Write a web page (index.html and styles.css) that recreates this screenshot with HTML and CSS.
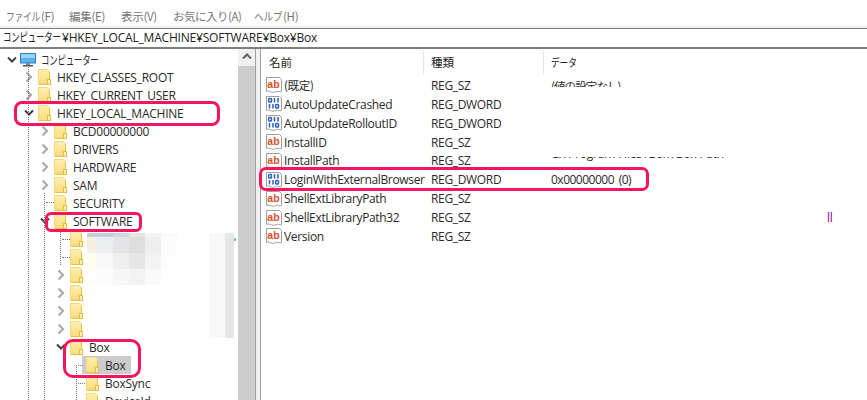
FILE: index.html
```html
<!DOCTYPE html>
<html lang="ja">
<head>
<meta charset="utf-8">
<title>レジストリ エディター</title>
<link rel="stylesheet" href="styles.css">
</head>
<body>
<svg class="defs" width="0" height="0" aria-hidden="true">
  <defs>
    <linearGradient id="fg" x1="0" y1="0" x2="0" y2="1"><stop offset="0" stop-color="#feeeb0"/><stop offset="1" stop-color="#fbdc7c"/></linearGradient>
    <symbol id="folder" viewBox="0 0 13 16">
      <path d="M.5 .5H9.5L11.5 2.5V15.5H.5Z" fill="url(#fg)" stroke="#f3d979"/>
      <path d="M11.5 3V15.5H1" fill="none" stroke="#eac23f"/>
      <rect x="9.5" y="10.5" width="3" height="5" fill="#fdf0bb" stroke="#e9bd33"/>
    </symbol>
    <symbol id="chev-r" viewBox="0 0 8 12"><path d="M1.5 1.5L6 6L1.5 10.500" fill="none" stroke="#a6a6a6" stroke-width="2"/></symbol>
    <symbol id="chev-d" viewBox="0 0 10 8"><path d="M1 1.500L5 5.500L9 1.500" fill="none" stroke="#404040" stroke-width="2"/></symbol>
    <symbol id="ab" viewBox="0 0 16 16">
      <path d="M.5 .5H13.500L15.500 2.500V14.500C13.500 15.500 12 13.500 10 14.500S6 15.500 4 14.500S1.500 14 .5 14.500Z" fill="#fff" stroke="#a0a0a0"/>
      <text x="1.300" y="11" class="ab-text">ab</text>
    </symbol>
    <symbol id="bin" viewBox="0 0 16 16">
      <path d="M.5 .5H13.500L15.500 2.500V14.500C13.500 15.500 12 13.500 10 14.500S6 15.500 4 14.500S1.500 14 .5 14.500Z" fill="#fff" stroke="#a0a0a0"/>
      <g fill="none" stroke="#2a5fc4" stroke-width="1.500">
        <rect x="2.700" y="2.500" width="2.800" height="3.500" rx=".8"/><path d="M8.500 2V6.500M12 2V6.500"/>
        <path d="M3.500 8V12.500M7 8V12.500"/><rect x="9.700" y="8.500" width="2.800" height="3.500" rx=".8"/>
      </g>
    </symbol>
  </defs>
</svg>

<div class="window">
  <nav class="menu">
    <span class="m1"><span class="kana k-file">ファイル</span>(F)</span><span class="m2">編集(E)</span><span class="m3">表示(V)</span><span class="m4">お気に入り(A)</span><span class="m5"><span class="kana k-help">ヘルプ</span>(H)</span>
  </nav>
  <div class="address"><span class="kana k-pc">コンピューター</span>¥HKEY_LOCAL_MACHINE¥SOFTWARE¥Box¥Box</div>

  <main class="panes">
    <section class="tree-pane">
      <div class="tree">
        <div class="row l0"><svg class="slot-icon"><use href="#chev-d"/></svg><svg class="pc" viewBox="0 0 16 14"><rect x=".5" y=".5" width="15" height="9.500" fill="#55b4ee" stroke="#2f7fc0"/><rect x="1" y="1" width="14" height="4" fill="#9ad6f7"/><rect x="6" y="10" width="4" height="2" fill="#7a8a99"/><rect x="3" y="12" width="10" height="1.500" fill="#46525e"/></svg><span class="label pc-label"><span class="kana k-pc">コンピューター</span></span></div>
        <div class="row l1"><svg class="slot-icon"><use href="#chev-r"/></svg><div class="node"><svg class="folder"><use href="#folder"/></svg><span class="label">HKEY_CLASSES_ROOT</span></div></div>
        <div class="row l1"><svg class="slot-icon"><use href="#chev-r"/></svg><div class="node"><svg class="folder"><use href="#folder"/></svg><span class="label">HKEY_CURRENT_USER</span></div></div>
        <div class="row l1"><svg class="slot-icon"><use href="#chev-d"/></svg><div class="node"><svg class="folder"><use href="#folder"/></svg><span class="label">HKEY_LOCAL_MACHINE</span></div></div>
        <div class="row l2"><svg class="slot-icon"><use href="#chev-r"/></svg><div class="node"><svg class="folder"><use href="#folder"/></svg><span class="label">BCD00000000</span></div></div>
        <div class="row l2"><svg class="slot-icon"><use href="#chev-r"/></svg><div class="node"><svg class="folder"><use href="#folder"/></svg><span class="label">DRIVERS</span></div></div>
        <div class="row l2"><svg class="slot-icon"><use href="#chev-r"/></svg><div class="node"><svg class="folder"><use href="#folder"/></svg><span class="label">HARDWARE</span></div></div>
        <div class="row l2"><svg class="slot-icon"><use href="#chev-r"/></svg><div class="node"><svg class="folder"><use href="#folder"/></svg><span class="label">SAM</span></div></div>
        <div class="row l2"><span class="slot"></span><div class="node"><svg class="folder"><use href="#folder"/></svg><span class="label">SECURITY</span></div></div>
        <div class="row l2"><svg class="slot-icon"><use href="#chev-d"/></svg><div class="node"><svg class="folder"><use href="#folder"/></svg><span class="label">SOFTWARE</span></div></div>
        <div class="row l3"><span class="slot"></span><div class="node"><svg class="folder"><use href="#folder"/></svg></div></div>
        <div class="row l3"><span class="slot"></span><div class="node"><svg class="folder"><use href="#folder"/></svg></div></div>
        <div class="row l3"><svg class="slot-icon"><use href="#chev-r"/></svg><div class="node"><svg class="folder"><use href="#folder"/></svg></div></div>
        <div class="row l3"><svg class="slot-icon"><use href="#chev-r"/></svg><div class="node"><svg class="folder"><use href="#folder"/></svg></div></div>
        <div class="row l3"><svg class="slot-icon"><use href="#chev-r"/></svg><div class="node"><svg class="folder"><use href="#folder"/></svg></div></div>
        <div class="row l3"><svg class="slot-icon"><use href="#chev-r"/></svg><div class="node"><svg class="folder"><use href="#folder"/></svg></div></div>
        <div class="row l3"><svg class="slot-icon"><use href="#chev-d"/></svg><div class="node"><svg class="folder"><use href="#folder"/></svg><span class="label">Box</span></div></div>
        <div class="row l4"><span class="slot"></span><div class="node selected"><svg class="folder"><use href="#folder"/></svg><span class="label">Box</span></div></div>
        <div class="row l4"><span class="slot"></span><div class="node"><svg class="folder"><use href="#folder"/></svg><span class="label">BoxSync</span></div></div>
        <div class="row l4"><span class="slot"></span><div class="node"><svg class="folder"><use href="#folder"/></svg><span class="label">DeviceId</span></div></div>

        <i class="vline v1"></i><i class="vline v2"></i><i class="vline v3"></i><i class="vline v4"></i>
        <i class="hline h1"></i><i class="hline h2"></i><i class="hline h3"></i><i class="hline h4"></i><i class="hline h5"></i>

        <svg class="mosaic" width="150" height="106" viewBox="0 0 150 106">
          <rect x="0" y="0" width="9" height="4" fill="#c9ccd3"/><rect x="9" y="0" width="17" height="4" fill="#c3cbe0"/><rect x="26" y="0" width="16" height="4" fill="#d2d7e3"/><rect x="42" y="0" width="16" height="4" fill="#e6e6e6"/><rect x="58" y="0" width="16" height="4" fill="#f2f2f2"/><rect x="74" y="0" width="16" height="4" fill="#fafafa"/>
          <rect x="0" y="4" width="9" height="16" fill="#f5f0e3"/><rect x="9" y="4" width="17" height="16" fill="#eceef2"/><rect x="26" y="4" width="16" height="16" fill="#e4e4e6"/><rect x="42" y="4" width="16" height="16" fill="#dedede"/><rect x="58" y="4" width="16" height="16" fill="#efefef"/><rect x="74" y="4" width="16" height="16" fill="#fcfcfc"/>
          <rect x="0" y="20" width="9" height="16" fill="#fefdf0"/><rect x="9" y="20" width="17" height="16" fill="#f9f9f9"/><rect x="26" y="20" width="16" height="16" fill="#efefef"/><rect x="42" y="20" width="16" height="16" fill="#e6e6e6"/><rect x="58" y="20" width="16" height="16" fill="#f3f3f3"/><rect x="74" y="20" width="16" height="16" fill="#fdfdfd"/>
          <rect x="0" y="36" width="9" height="16" fill="#fdfdfa"/><rect x="9" y="36" width="17" height="16" fill="#fcfcfc"/><rect x="26" y="36" width="16" height="16" fill="#f7f7f7"/><rect x="42" y="36" width="16" height="16" fill="#f3f3f3"/><rect x="58" y="36" width="16" height="16" fill="#fafafa"/><rect x="74" y="36" width="16" height="16" fill="#fefefe"/>
          <rect x="122" y="0" width="16" height="105" fill="#f8f8f8"/><rect x="138" y="0" width="9" height="105" fill="#e6e6e6"/>
          <rect x="147" y="5" width="2" height="3" fill="#5cbfe0"/>
        </svg>
      </div>
      <div class="scrollbar">
        <div class="scroll-btn"><svg width="10" height="7" viewBox="0 0 10 7"><path d="M1 5.500L5 1.500L9 5.500" fill="none" stroke="#606060" stroke-width="2"/></svg></div>
        <div class="scroll-thumb"></div>
      </div>
    </section>

    <div class="splitter"></div>

    <section class="list">
      <div class="head">
        <div class="c-name">名前</div>
        <div class="c-type">種類</div>
        <div class="c-data"><span class="kana k-data">データ</span></div>
      </div>
      <div class="item"><svg class="vi"><use href="#ab"/></svg><span class="c-name2 ja">(既定)</span><span class="c-type2">REG_SZ</span><span class="c-data2"><span class="clip-top">(値の設定なし)</span></span></div>
      <div class="item"><svg class="vi"><use href="#bin"/></svg><span class="c-name2">AutoUpdateCrashed</span><span class="c-type2">REG_DWORD</span><span class="c-data2"></span></div>
      <div class="item"><svg class="vi"><use href="#bin"/></svg><span class="c-name2">AutoUpdateRolloutID</span><span class="c-type2">REG_DWORD</span><span class="c-data2"></span></div>
      <div class="item"><svg class="vi"><use href="#ab"/></svg><span class="c-name2">InstallID</span><span class="c-type2">REG_SZ</span><span class="c-data2"></span></div>
      <div class="item"><svg class="vi"><use href="#ab"/></svg><span class="c-name2">InstallPath</span><span class="c-type2">REG_SZ</span><span class="c-data2"><span class="clip-bottom"><span>C:¥Program Files¥Box¥Box Path</span></span></span></div>
      <div class="item"><svg class="vi"><use href="#bin"/></svg><span class="c-name2">LoginWithExternalBrowser</span><span class="c-type2">REG_DWORD</span><span class="c-data2 value">0x00000000 (0)</span></div>
      <div class="item"><svg class="vi"><use href="#ab"/></svg><span class="c-name2">ShellExtLibraryPath</span><span class="c-type2">REG_SZ</span><span class="c-data2"></span></div>
      <div class="item"><svg class="vi"><use href="#ab"/></svg><span class="c-name2">ShellExtLibraryPath32</span><span class="c-type2">REG_SZ</span><span class="c-data2 trail">ll</span></div>
      <div class="item"><svg class="vi"><use href="#ab"/></svg><span class="c-name2">Version</span><span class="c-type2">REG_SZ</span><span class="c-data2"></span></div>
    </section>
  </main>

  <div class="ring ring-hklm"></div>
  <div class="ring ring-software"></div>
  <div class="ring ring-box"></div>
  <div class="ring ring-login"></div>
</div>
</body>
</html>
```
FILE: styles.css
```css
* { box-sizing: border-box; }
html, body { margin: 0; padding: 0; background: #fff; }
body { width: 867px; height: 400px; overflow: hidden; font-family: "Open Sans", "Noto Sans CJK JP", sans-serif; font-size: 12px; color: #222; }
.defs { position: absolute; }
.window { position: relative; width: 867px; height: 400px; overflow: hidden; display: flex; flex-direction: column; }

.kana { display: inline-block; transform-origin: left center; white-space: nowrap; font-family: "Noto Sans CJK JP", sans-serif; vertical-align: baseline; }
.k-pc { width: 59px; font-size: 12px; transform: scaleX(.7); }
.k-file { width: 35px; transform: scaleX(.76); }
.k-help { width: 29px; transform: scaleX(.84); }
.k-data { width: 26px; transform: scaleX(.75); }

.menu { height: 26px; flex: none; display: flex; align-items: flex-end; padding-bottom: 2px; color: #777; white-space: nowrap; background: #fff; font-family: "Noto Sans CJK JP", sans-serif; font-size: 11.500px; letter-spacing: -.3px; line-height: 16px; }
.menu span { display: block; }
.menu .kana { display: inline-block; }
.m1 { width: 63px; margin-left: 6px; }
.m2 { width: 52px; }
.m3 { width: 52px; }
.m4 { width: 81px; letter-spacing: -.5px; }

.address { height: 23px; flex: none; background: #fff; border-top: 2px solid #f0f0f0; border-bottom: 2px solid #7f7f7f; box-shadow: inset 0 1px 0 #7f7f7f; padding: 0 0 0 3px; line-height: 18px; white-space: nowrap; color: #222; font-size: 12px; letter-spacing: -.2px; }

.panes { flex: 1; min-height: 0; display: flex; }
.tree-pane { width: 255px; flex: none; display: flex; }
.tree { position: relative; width: 238px; flex: none; overflow: hidden; padding-top: 2px; }
.row { display: flex; align-items: center; height: 18px; white-space: nowrap; }
.l0 { padding-left: 7px; height: 17px; }
.l1 { padding-left: 24px; }
.l2 { padding-left: 40px; }
.l3 { padding-left: 56px; }
.l4 { padding-left: 72px; }
.slot, .slot-icon { width: 10px; height: 12px; flex: none; }
.pc { width: 16px; height: 14px; margin-left: 3px; flex: none; }
.pc-label { margin-left: 5px; }
.node { display: flex; align-items: center; height: 18px; padding: 0 5px 0 4px; }
.folder { width: 13px; height: 16px; flex: none; margin-right: 6px; }
.label { line-height: 18px; letter-spacing: -.25px; color: #2a2a2a; margin-top: 2px; }
.selected { background: #ccc; }

.vline { position: absolute; width: 0; border-left: 1px dotted #777; }
.hline { position: absolute; height: 0; border-top: 1px dotted #777; }
.v1 { left: 28px; top: 16px; bottom: 0; }
.v2 { left: 44px; top: 144px; bottom: 0; }
.v3 { left: 60px; top: 180px; height: 36px; }
.v4 { left: 76px; top: 316px; bottom: 0; }
.h1 { left: 46px; top: 153px; width: 8px; }
.h2 { left: 62px; top: 190px; width: 8px; }
.h3 { left: 62px; top: 208px; width: 8px; }
.h4 { left: 78px; top: 316px; width: 5px; }
.h5 { left: 78px; top: 334px; width: 7px; }
.mosaic { position: absolute; left: 87px; top: 184px; }

.scrollbar { width: 17px; flex: none; background: #f0f0f0; display: flex; flex-direction: column; }
.scroll-btn { height: 17px; flex: none; display: flex; align-items: center; justify-content: center; padding-bottom: 2px; }
.scroll-thumb { flex: 1; background: #cdcdcd; }
.splitter { width: 6px; flex: none; background: #f0f0f0; border-left: 1px solid #a0a0a0; border-right: 1px solid #a0a0a0; }

.list { flex: 1; min-width: 0; display: flex; flex-direction: column; background: #fff; padding-top: 2px; }
.head { display: flex; height: 25px; flex: none; line-height: 22px; font-family: "Noto Sans CJK JP", sans-serif; font-size: 11.500px; color: #222; }
.c-name { width: 163px; padding-left: 8px; border-right: 1px solid #e5e5e5; height: 24px; }
.c-type { width: 120px; padding-left: 7px; border-right: 1px solid #e5e5e5; height: 24px; }
.c-data { padding-left: 7px; }

.item { display: flex; align-items: center; height: 18.880px; white-space: nowrap; color: #2a2a2a; flex: none; padding-left: 5px; letter-spacing: -.33px; }
.vi { width: 16px; height: 16px; flex: none; margin-right: 2px; }
.c-name2 { width: 147px; flex: none; overflow: hidden; }
.ja { font-family: "Noto Sans CJK JP", sans-serif; font-size: 11.500px; }
.c-type2 { width: 120px; flex: none; }
.c-data2 { flex: 1; min-width: 0; position: relative; align-self: stretch; display: flex; align-items: center; }
.value { letter-spacing: -.5px; word-spacing: 2px; }
.clip-top { display: block; height: 9px; overflow: hidden; line-height: 17px; align-self: flex-start; margin-top: 2px; font-family: "Noto Sans CJK JP", sans-serif; font-size: 11.500px; letter-spacing: -.9px; }
.clip-bottom { display: flex; align-items: flex-end; height: 5px; overflow: hidden; margin-top: -2px; line-height: 16px; letter-spacing: -.2px; }
.trail { color: #8a008a; padding-left: 276px; }

.ab-text { font-family: "Liberation Sans", sans-serif; font-weight: 700; font-size: 10.500px; fill: #d9502a; letter-spacing: 0; }

.ring { position: absolute; border: 3px solid #f7145f; background: transparent; pointer-events: none; }
.ring-hklm { left: 14px; top: 101px; width: 206px; height: 25px; border-radius: 8px; }
.ring-software { left: 45px; top: 212px; width: 97px; height: 20px; border-radius: 6px; }
.ring-box { left: 63px; top: 339px; width: 78px; height: 39px; border-radius: 10px; }
.ring-login { left: 259px; top: 167px; width: 390px; height: 24px; border-radius: 7px; }
```
